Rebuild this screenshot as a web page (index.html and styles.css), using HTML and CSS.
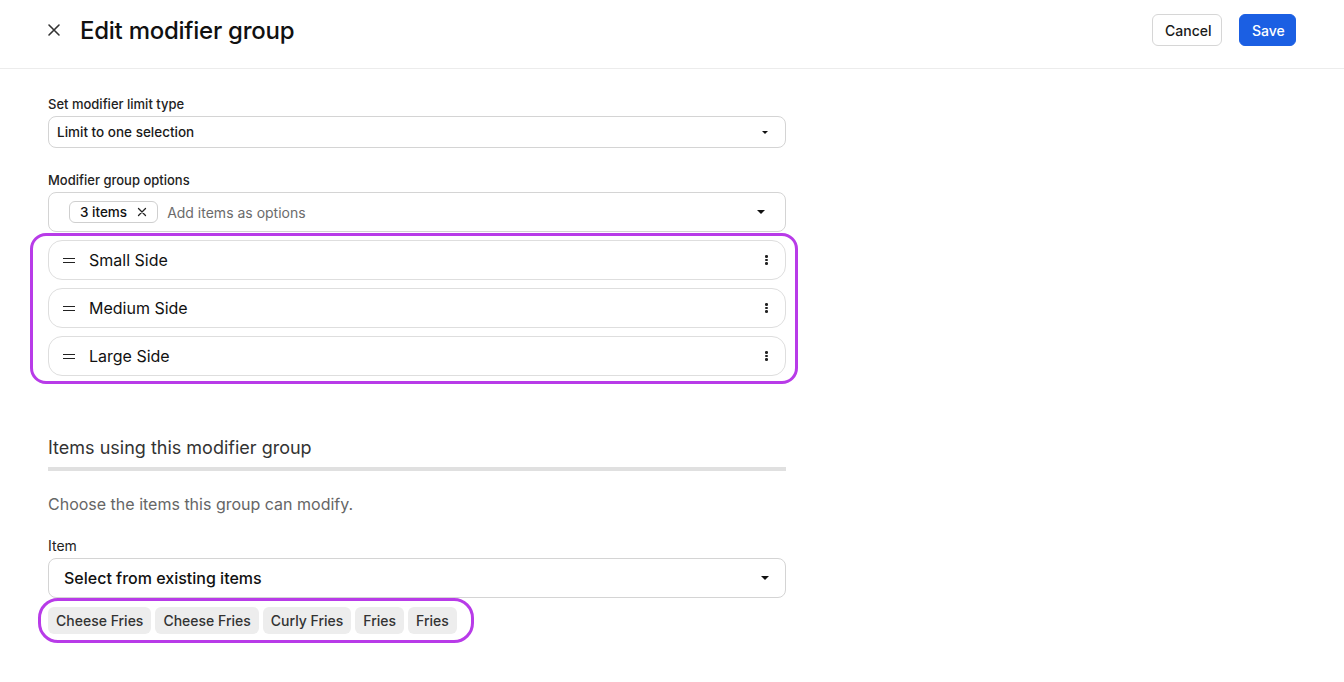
FILE: index.html
```html
<!DOCTYPE html>
<html>
<head>
<meta charset="utf-8">
<link rel="stylesheet" href="styles.css">
</head>
<body>
<header class="topbar">
  <div class="title-wrap">
    <button class="close-btn" aria-label="Close">
      <svg width="14" height="14" viewBox="0 0 14 14"><path d="M2 2L12 12M12 2L2 12" stroke="#333" stroke-width="1.6" stroke-linecap="round"/></svg>
    </button>
    <h1 class="title">Edit modifier group</h1>
  </div>
  <div class="actions">
    <button class="btn btn-secondary">Cancel</button>
    <button class="btn btn-primary">Save</button>
  </div>
</header>

<main class="content">
  <div class="field">
    <label class="label">Set modifier limit type</label>
    <div class="select select-sm">
      <span class="select-value">Limit to one selection</span>
      <span class="caret caret-sm"></span>
    </div>
  </div>

  <div class="field field-options">
    <label class="label">Modifier group options</label>
    <div class="select select-multi">
      <span class="chip-outline">3 items
        <svg width="10" height="10" viewBox="0 0 10 10"><path d="M1.5 1.5L8.5 8.5M8.5 1.5L1.5 8.5" stroke="#222" stroke-width="1.3" stroke-linecap="round"/></svg>
      </span>
      <span class="placeholder">Add items as options</span>
      <span class="caret"></span>
    </div>
  </div>

  <div class="highlight highlight-rows">
    <div class="row">
      <span class="handle"></span>
      <span class="row-text">Small Side</span>
      <span class="kebab"><i></i><i></i><i></i></span>
    </div>
    <div class="row">
      <span class="handle"></span>
      <span class="row-text">Medium Side</span>
      <span class="kebab"><i></i><i></i><i></i></span>
    </div>
    <div class="row">
      <span class="handle"></span>
      <span class="row-text">Large Side</span>
      <span class="kebab"><i></i><i></i><i></i></span>
    </div>
  </div>

  <section class="section">
    <h2 class="section-title">Items using this modifier group</h2>
    <p class="section-desc">Choose the items this group can modify.</p>
    <label class="label">Item</label>
    <div class="select select-lg">
      <span class="select-value-lg">Select from existing items</span>
      <span class="caret"></span>
    </div>
    <div class="highlight highlight-chips">
      <span class="tag">Cheese Fries</span>
      <span class="tag">Cheese Fries</span>
      <span class="tag">Curly Fries</span>
      <span class="tag">Fries</span>
      <span class="tag">Fries</span>
    </div>
  </section>
</main>
</body>
</html>
```

FILE: styles.css
```css
* { box-sizing: border-box; }
html, body { margin: 0; padding: 0; background: #fff; }
body {
  font-family: Inter, "Noto Sans", sans-serif;
  color: #1a1a1a;
  width: 1344px;
  height: 682px;
  overflow: hidden;
}
button { font-family: inherit; }

.topbar {
  height: 69px;
  border-bottom: 1px solid #ececec;
  display: flex;
  align-items: center;
  justify-content: space-between;
  padding: 0 48px 8px 44px;
}
.title-wrap { display: flex; align-items: center; }
.close-btn {
  width: 20px; height: 20px;
  border: 0; background: none; padding: 0;
  display: flex; align-items: center; justify-content: center;
  margin-right: 16px;
}
.title {
  margin: 0;
  font-size: 24px;
  font-weight: 500;
  letter-spacing: -0.25px;
  color: #111;
}
.actions { display: flex; gap: 17px; align-items: center; }
.btn {
  height: 32px;
  border-radius: 6px;
  font-size: 14px;
  font-weight: 500;
  padding: 0 12px;
}
.btn-secondary {
  background: #fff;
  border: 1px solid #d6d6d6;
  color: #1a1a1a;
  width: 70px;
}
.btn-primary {
  background: #1b5fe3;
  border: 1px solid #1b5fe3;
  color: #fff;
  width: 57px;
}

.content {
  padding: 27px 0 0 48px;
  width: 786px;
}
.field { display: flex; flex-direction: column; }
.label {
  font-size: 13px;
  font-weight: 500;
  color: #222;
  margin-bottom: 4px;
  line-height: 16px;
}
.select {
  border: 1px solid #d4d4d4;
  border-radius: 8px;
  display: flex;
  align-items: center;
  position: relative;
}
.select-sm {
  height: 32px;
  padding: 0 17px 0 8px;
}
.select-value {
  font-size: 13.5px;
  font-weight: 500;
  color: #1a1a1a;
  flex: 1;
}
.caret {
  width: 0; height: 0;
  border-left: 4px solid transparent;
  border-right: 4px solid transparent;
  border-top: 4px solid #111;
  margin-left: auto;
}
.caret-sm {
  border-left-width: 3.5px;
  border-right-width: 3.5px;
  border-top-width: 3.5px;
}
.field-options { margin-top: 24px; }
.select-multi {
  height: 40px;
  padding: 0 20px 0 20px;
}
.chip-outline {
  display: inline-flex;
  align-items: center;
  gap: 10px;
  height: 22px;
  padding: 0 10px;
  border: 1px solid #cfcfcf;
  border-radius: 6px;
  font-size: 13.5px;
  font-weight: 500;
  color: #111;
  margin-right: 9px;
}
.placeholder { font-size: 14px; color: #6b6b6b; }

.highlight {
  border: 3px solid #b83be8;
}
.highlight-rows {
  margin: 1px 0 0 -18px;
  width: 768px;
  border-radius: 16px;
  padding: 4px 9px 5px 15px;
  display: flex;
  flex-direction: column;
  gap: 8px;
}
.row {
  height: 40px;
  border: 1px solid #dedede;
  border-radius: 14px;
  display: flex;
  align-items: center;
  padding: 0 17px 0 14px;
}
.handle {
  width: 12px; height: 5px;
  border-top: 1.5px solid #222;
  border-bottom: 1.5px solid #222;
  margin-right: 14px;
}
.row-text { font-size: 16px; color: #111; flex: 1; }
.kebab {
  display: flex; flex-direction: column; gap: 1px;
  width: 3px;
}
.kebab i {
  display: block;
  width: 2.5px; height: 2.5px;
  border-radius: 50%;
  background: #222;
}

.section { margin-top: 53px; display: flex; flex-direction: column; }
.section-title {
  margin: 0;
  font-size: 18px;
  font-weight: 400;
  color: #333;
  line-height: 22px;
  padding-bottom: 8px;
  border-bottom: 4px solid #e0e0e0;
}
.section-desc {
  margin: 23px 0 0;
  font-size: 16px;
  color: #666;
  line-height: 20px;
}
.section .label { margin-top: 24px; font-size: 14px; font-weight: 400; }
.select-lg {
  height: 40px;
  padding: 0 16px 0 15px;
}
.select-value-lg {
  font-size: 16px;
  font-weight: 500;
  color: #111;
  flex: 1;
}
.highlight-chips {
  margin: 0 0 0 -10px;
  align-self: flex-start;
  border-radius: 20px;
  padding: 6px 14px 6px 7px;
  display: flex;
  gap: 4px;
}
.tag {
  background: #ededed;
  border-radius: 6px;
  height: 27px;
  padding: 0 8px;
  display: inline-flex;
  align-items: center;
  font-size: 14px;
  font-weight: 500;
  color: #333;
}
```
